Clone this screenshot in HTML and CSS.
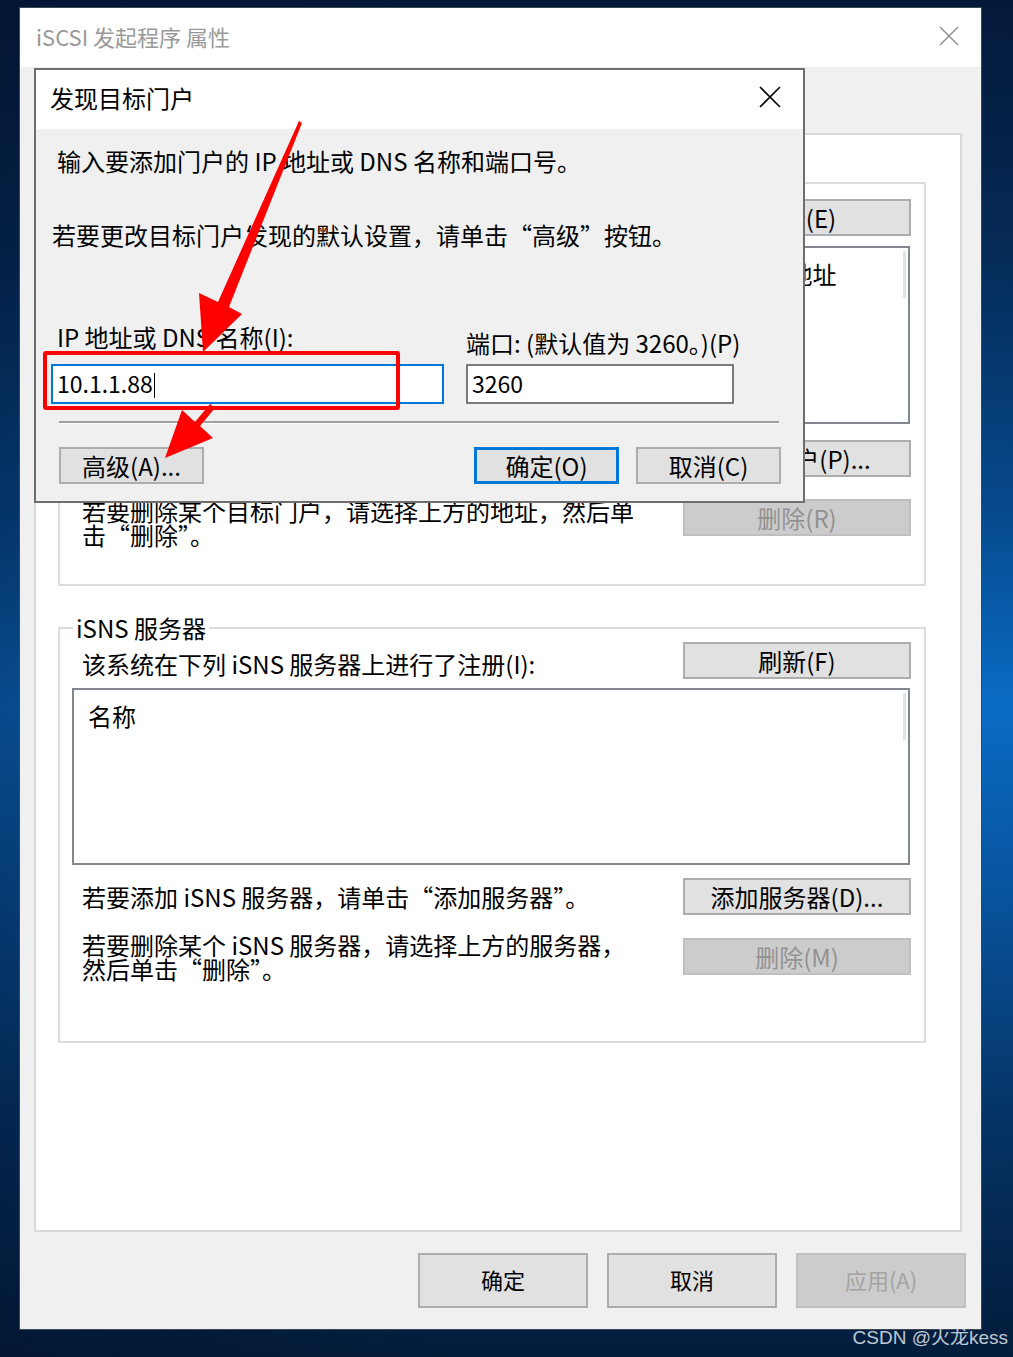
FILE: index.html
```html
<!DOCTYPE html>
<html lang="zh-CN">
<head>
    <meta charset="UTF-8">
    <meta name="viewport" content="width=device-width, initial-scale=1.0">
    <title>iSCSI 发起程序 属性</title>
    <link rel="stylesheet" href="styles.css">
</head>
<body>
    <div class="window">
        <div class="titlebar">
            <span class="title">iSCSI 发起程序 属性</span>
            <svg class="close close-inactive" width="20" height="20" viewBox="0 0 20 20">
                <path d="M1 1 L19 19 M19 1 L1 19" />
            </svg>
        </div>

        <div class="window-body">
            <div class="panel">
                <fieldset class="group group-portals">
                    <legend>目标门户</legend>
                    <div class="row row-first">
                        <span class="row-text">系统将在下列门户上查找目标(T):</span>
                        <button class="btn side-btn">刷新(E)</button>
                    </div>
                    <div class="listbox listbox-portals">
                        <span class="col col-addr">地址</span>
                        <span class="col col-port">端口</span>
                        <span class="col col-adapter">适配器</span>
                        <span class="col">IP 地址</span>
                    </div>
                    <div class="row row-add">
                        <span class="row-text">若要添加目标门户，请单击“发现门户”。</span>
                        <button class="btn side-btn">发现门户(P)...</button>
                    </div>
                    <div class="row row-remove">
                        <span class="row-text">若要删除某个目标门户，请选择上方的地址，然后单<br>击“删除”。</span>
                        <button class="btn side-btn" disabled>删除(R)</button>
                    </div>
                </fieldset>

                <fieldset class="group group-isns">
                    <legend>iSNS 服务器</legend>
                    <div class="row row-first-isns">
                        <span class="row-text">该系统在下列 iSNS 服务器上进行了注册(I):</span>
                        <button class="btn side-btn">刷新(F)</button>
                    </div>
                    <div class="listbox listbox-isns">
                        <span class="col">名称</span>
                    </div>
                    <div class="row row-add-isns">
                        <span class="row-text">若要添加 iSNS 服务器，请单击“添加服务器”。</span>
                        <button class="btn side-btn">添加服务器(D)...</button>
                    </div>
                    <div class="row row-remove-isns">
                        <span class="row-text">若要删除某个 iSNS 服务器，请选择上方的服务器，<br>然后单击“删除”。</span>
                        <button class="btn side-btn" disabled>删除(M)</button>
                    </div>
                </fieldset>
            </div>

            <div class="footer">
                <button class="btn footer-btn">确定</button>
                <button class="btn footer-btn">取消</button>
                <button class="btn footer-btn" disabled>应用(A)</button>
            </div>
        </div>
    </div>

    <div class="watermark">CSDN @火龙kess</div>

    <!-- modal on top of the properties window -->
    <div class="dialog">
        <div class="dialog-titlebar">
            <span class="dialog-title">发现目标门户</span>
            <svg class="close" width="22" height="22" viewBox="0 0 22 22">
                <path d="M1 1 L21 21 M21 1 L1 21" />
            </svg>
        </div>
        <div class="dialog-body">
            <p class="note note-first">输入要添加门户的 IP 地址或 DNS 名称和端口号。</p>
            <p class="note note-second">若要更改目标门户发现的默认设置，请单击“高级”按钮。</p>

            <div class="fields">
                <div class="field field-ip">
                    <label class="field-label">IP 地址或 DNS 名称(I):</label>
                    <div class="textbox textbox-focus">10.1.1.88<span class="caret"></span></div>
                </div>
                <div class="field field-port">
                    <label class="field-label">端口: (默认值为 3260。)(P)</label>
                    <div class="textbox">3260</div>
                </div>
            </div>

            <div class="separator"></div>

            <div class="dialog-buttons">
                <button class="btn dlg-btn">高级(A)...</button>
                <div class="dialog-buttons-right">
                    <button class="btn dlg-btn btn-default">确定(O)</button>
                    <button class="btn dlg-btn">取消(C)</button>
                </div>
            </div>
        </div>
    </div>

    <!-- red annotations -->
    <div class="highlight"></div>
    <svg class="arrows" width="1013" height="1357" viewBox="0 0 1013 1357">
        <polygon points="299,121 302,123 229,307 242,314 203,352 199,293 218,302" />
        <polygon points="210,404 215,408 200,426 213,438 165,458 182,410 195,422" />
    </svg>
</body>
</html>
```

FILE: styles.css
```css
* {
    box-sizing: border-box;
}

html, body {
    margin: 0;
    width: 1013px;
    height: 1357px;
    overflow: hidden;
}

body {
    position: relative;
    font-family: "Noto Sans CJK SC", "Noto Sans", sans-serif;
    color: #000;
    background:
        linear-gradient(to right, rgba(0, 12, 35, 0.35), rgba(0, 12, 35, 0) 45%),
        linear-gradient(to bottom, #04193a 0%, #052a55 18%, #064a8e 38%, #0a6cc4 52%, #08539d 66%, #053466 82%, #031c3b 100%);
}

/* main properties window */
.window {
    width: 963px;
    height: 1323px;
    margin: 7px 0 0 19px;
    border: 1px solid #3b4754;
    background: #f0f0f0;
    display: flex;
    flex-direction: column;
}

.titlebar {
    height: 59px;
    flex: none;
    background: #fff;
    display: flex;
    align-items: center;
    justify-content: space-between;
    padding: 0 22px 4px 16px;
}

.title {
    font-size: 22px;
    color: #999;
}

.close path {
    fill: none;
    stroke: #000;
    stroke-width: 1.6;
}

.close-inactive path {
    stroke: #8a8a8a;
    stroke-width: 1.4;
}

.window-body {
    flex: 1;
    padding-top: 66px;
}

.panel {
    height: 1099px;
    margin: 0 19px 0 14px;
    border: 2px solid #dadada;
    background: #fff;
    padding: 34px 34px 0 22px;
}

.group {
    margin: 0;
    min-width: 0;
    padding: 0 13px 0 12px;
    border: 2px solid #dcdcdc;
}

.group legend {
    font-size: 24px;
    line-height: 28px;
    padding: 0 3px;
    margin-left: 1px;
}

.group-portals {
    padding-bottom: 48px;
}

.group-isns {
    margin-top: 28px;
    padding-bottom: 66px;
}

.row {
    height: 37px;
    display: flex;
    align-items: center;
    justify-content: space-between;
}

.row-text {
    padding: 10px 0 0 10px;
    font-size: 24px;
    line-height: 24px;
}

.row-first {
    margin-top: 2px;
}

.row-add {
    margin-top: 16px;
}

.row-remove {
    margin-top: 22px;
}

.row-first-isns .row-text {
    padding-top: 7px;
}

.row-add-isns {
    margin-top: 13px;
}

.row-add-isns .row-text,
.row-remove-isns .row-text {
    padding-top: 0;
}

.row-remove-isns {
    margin-top: 23px;
}

.btn {
    font-family: inherit;
    display: flex;
    align-items: center;
    justify-content: center;
    padding: 0;
    background: #e1e1e1;
    border: 2px solid #adadad;
    color: #000;
    font-size: 24px;
}

.btn:disabled {
    background: #cccccc;
    border-color: #bfbfbf;
    color: #929292;
}

.side-btn {
    flex: none;
    width: 228px;
    height: 37px;
}

.listbox {
    position: relative;
    display: flex;
    margin: 10px 1px 0 0;
    padding: 12px 0 0 14px;
    border: 2px solid #828790;
    background: #fff;
    font-size: 24px;
    line-height: 28px;
}

.listbox::after {
    content: "";
    position: absolute;
    top: 3px;
    right: 2px;
    width: 3px;
    height: 47px;
    background: #e3e3e3;
}

.listbox-portals {
    height: 178px;
}

.listbox-isns {
    height: 177px;
    margin-top: 9px;
}

.col-addr {
    width: 240px;
}

.col-port {
    width: 180px;
}

.col-adapter {
    width: 253px;
}

.footer {
    display: flex;
    justify-content: flex-end;
    gap: 19px;
    padding: 21px 15px 0 0;
}

.footer-btn {
    width: 170px;
    height: 55px;
    padding-bottom: 3px;
    font-size: 22px;
}

.footer-btn:disabled {
    color: #a3a3a3;
}

.watermark {
    margin-top: -2px;
    padding-right: 5px;
    text-align: right;
    font-family: "Liberation Sans", "Noto Sans CJK SC", sans-serif;
    font-size: 19px;
    line-height: 20px;
    color: rgba(225, 232, 240, 0.85);
}

/* discover portal dialog */
.dialog {
    position: absolute;
    left: 34px;
    top: 68px;
    width: 771px;
    height: 435px;
    border: 2px solid #6e6e6e;
    background: #f0f0f0;
}

.dialog-titlebar {
    height: 59px;
    background: #fff;
    display: flex;
    align-items: center;
    justify-content: space-between;
    padding: 0 22px 5px 14px;
}

.dialog-title {
    font-size: 24px;
}

.dialog-body {
    padding: 17px 22px 0 16px;
    font-size: 24px;
    line-height: 30px;
}

.note {
    margin: 0;
}

.note-first {
    margin-left: 5px;
}

.note-second {
    margin-top: 44px;
}

.fields {
    display: flex;
    align-items: flex-end;
    margin: 72px 0 0 -1px;
}

.field {
    display: flex;
    flex-direction: column;
}

.field-ip {
    width: 393px;
}

.field-ip .field-label {
    padding-left: 6px;
    margin-bottom: 12px;
}

.field-port {
    width: 268px;
    margin-left: 22px;
}

.field-port .field-label {
    margin-bottom: 6px;
    white-space: nowrap;
}

.textbox {
    height: 40px;
    border: 2px solid #7a7a7a;
    background: #fff;
    padding-left: 4px;
    font-size: 23px;
    line-height: 34px;
}

.textbox-focus {
    border-color: #0078d7;
}

.caret {
    display: inline-block;
    width: 1px;
    height: 25px;
    margin-left: 1px;
    vertical-align: -5px;
    background: #000;
}

.separator {
    margin: 17px 2px 0 7px;
    border-top: 2px solid #a0a0a0;
    border-bottom: 1px solid #fff;
}

.dialog-buttons {
    display: flex;
    justify-content: space-between;
    margin: 23px 0 0 7px;
}

.dialog-buttons-right {
    display: flex;
    gap: 17px;
}

.dlg-btn {
    width: 145px;
    height: 37px;
}

.btn-default {
    border: 3px solid #0078d7;
}

/* screenshot annotations */
.highlight {
    position: absolute;
    left: 43px;
    top: 351px;
    width: 357px;
    height: 59px;
    border: 4px solid #ff0000;
    border-radius: 3px;
}

.arrows {
    position: absolute;
    left: 0;
    top: 0;
    pointer-events: none;
}

.arrows polygon {
    fill: #ff0000;
}
```
